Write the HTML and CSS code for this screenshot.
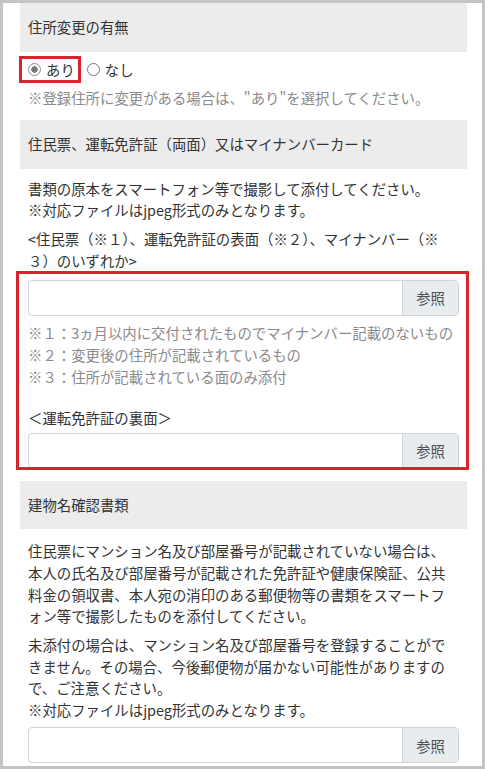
FILE: index.html
```html
<!DOCTYPE html>
<html lang="ja">
<head>
  <meta charset="UTF-8" />
  <meta name="viewport" content="width=device-width, initial-scale=1.0" />
  <title>住所変更</title>
  <link rel="stylesheet" href="styles.css">
</head>
<body>
  <div class="frame">
    <section class="item">
      <div class="item-head">住所変更の有無</div>
      <div class="item-body">
        <div class="radios">
          <label class="radio marked"><input type="radio" name="change" checked> あり</label>
          <label class="radio"><input type="radio" name="change"> なし</label>
        </div>
        <p class="note">※登録住所に変更がある場合は、"あり"を選択してください。</p>
      </div>
    </section>

    <section class="item">
      <div class="item-head">住民票、運転免許証（両面）又はマイナンバーカード</div>
      <div class="item-body">
        <p>書類の原本をスマートフォン等で撮影して添付してください。<br>※対応ファイルはjpeg形式のみとなります。</p>
        <p>&lt;住民票（※１）、運転免許証の表面（※２）、マイナンバー（※３）のいずれか&gt;</p>
        <div class="upload-group">
          <div class="file"><span class="file-name"></span><span class="file-btn">参照</span></div>
          <ul class="notes">
            <li>※１：3ヵ月以内に交付されたものでマイナンバー記載のないもの</li>
            <li>※２：変更後の住所が記載されているもの</li>
            <li>※３：住所が記載されている面のみ添付</li>
          </ul>
          <p class="sub-label">＜運転免許証の裏面＞</p>
          <div class="file"><span class="file-name"></span><span class="file-btn">参照</span></div>
        </div>
      </div>
    </section>

    <section class="item">
      <div class="item-head">建物名確認書類</div>
      <div class="item-body body-tall">
        <p>住民票にマンション名及び部屋番号が記載されていない場合は、本人の氏名及び部屋番号が記載された免許証や健康保険証、公共料金の領収書、本人宛の消印のある郵便物等の書類をスマートフォン等で撮影したものを添付してください。</p>
        <p>未添付の場合は、マンション名及び部屋番号を登録することができません。その場合、今後郵便物が届かない可能性がありますので、ご注意ください。<br>※対応ファイルはjpeg形式のみとなります。</p>
        <div class="file"><span class="file-name"></span><span class="file-btn">参照</span></div>
      </div>
    </section>
  </div>
</body>
</html>
```

FILE: styles.css
```css
html, body {
  margin: 0;
  padding: 0;
}
body {
  width: 485px;
  height: 769px;
  overflow: hidden;
  background: white;
  color: #333;
  font-family: "Noto Sans CJK JP", "Noto Sans", sans-serif;
  font-size: 14.4px;
  line-height: 1.5;
}
.frame {
  height: 769px;
  box-sizing: border-box;
  border: 3px solid #c4c4c4;
  padding: 0 15px 0 17px;
  overflow: hidden;
}
p {
  margin: 0 0 7px;
}
.item-head {
  background: #ececec;
  padding: 13px 8px 14px;
}
.item-body {
  padding: 9px 8px 12px;
}
.body-tall {
  padding-top: 11px;
}
.radios {
  display: flex;
  align-items: center;
  height: 22px;
  margin-top: -2px;
}
.radio {
  display: inline-flex;
  align-items: center;
  margin-right: 12px;
  position: relative;
}
.radio input {
  appearance: none;
  -webkit-appearance: none;
  width: 13px;
  height: 13px;
  margin: 0 5px 0 0;
  border: 1px solid #777;
  border-radius: 50%;
  background: white;
  box-sizing: border-box;
}
.radio input:checked {
  border-color: #8a8a8a;
  background: radial-gradient(circle, #7a7a7a 0 3px, white 3.5px);
}
.marked::after {
  content: "";
  position: absolute;
  top: -3px;
  bottom: -3px;
  left: -9px;
  right: -6px;
  border: 3px solid #d8222c;
}
.note {
  color: #8a8a8a;
  margin: 6px 0 0;
}
.upload-group {
  position: relative;
  margin-top: 9px;
}
.upload-group::after {
  content: "";
  position: absolute;
  top: -9px;
  bottom: -1px;
  left: -12px;
  right: -10px;
  border: 3px solid #d8222c;
}
.file {
  display: flex;
  height: 36px;
  box-sizing: border-box;
  border: 1px solid #ced4da;
  border-radius: 4px;
  overflow: hidden;
  background: white;
}
.file-name {
  flex: 1;
}
.file-btn {
  display: flex;
  align-items: center;
  padding: 0 13px;
  background: #e9ecef;
  border-left: 1px solid #ced4da;
  color: #495057;
}
.notes {
  list-style: none;
  margin: 6px 0 0;
  padding: 0;
  color: #8a8a8a;
  line-height: 22px;
}
.sub-label {
  margin: 19px 0 4px;
}
.body-tall .file {
  margin-top: 6px;
}
```
